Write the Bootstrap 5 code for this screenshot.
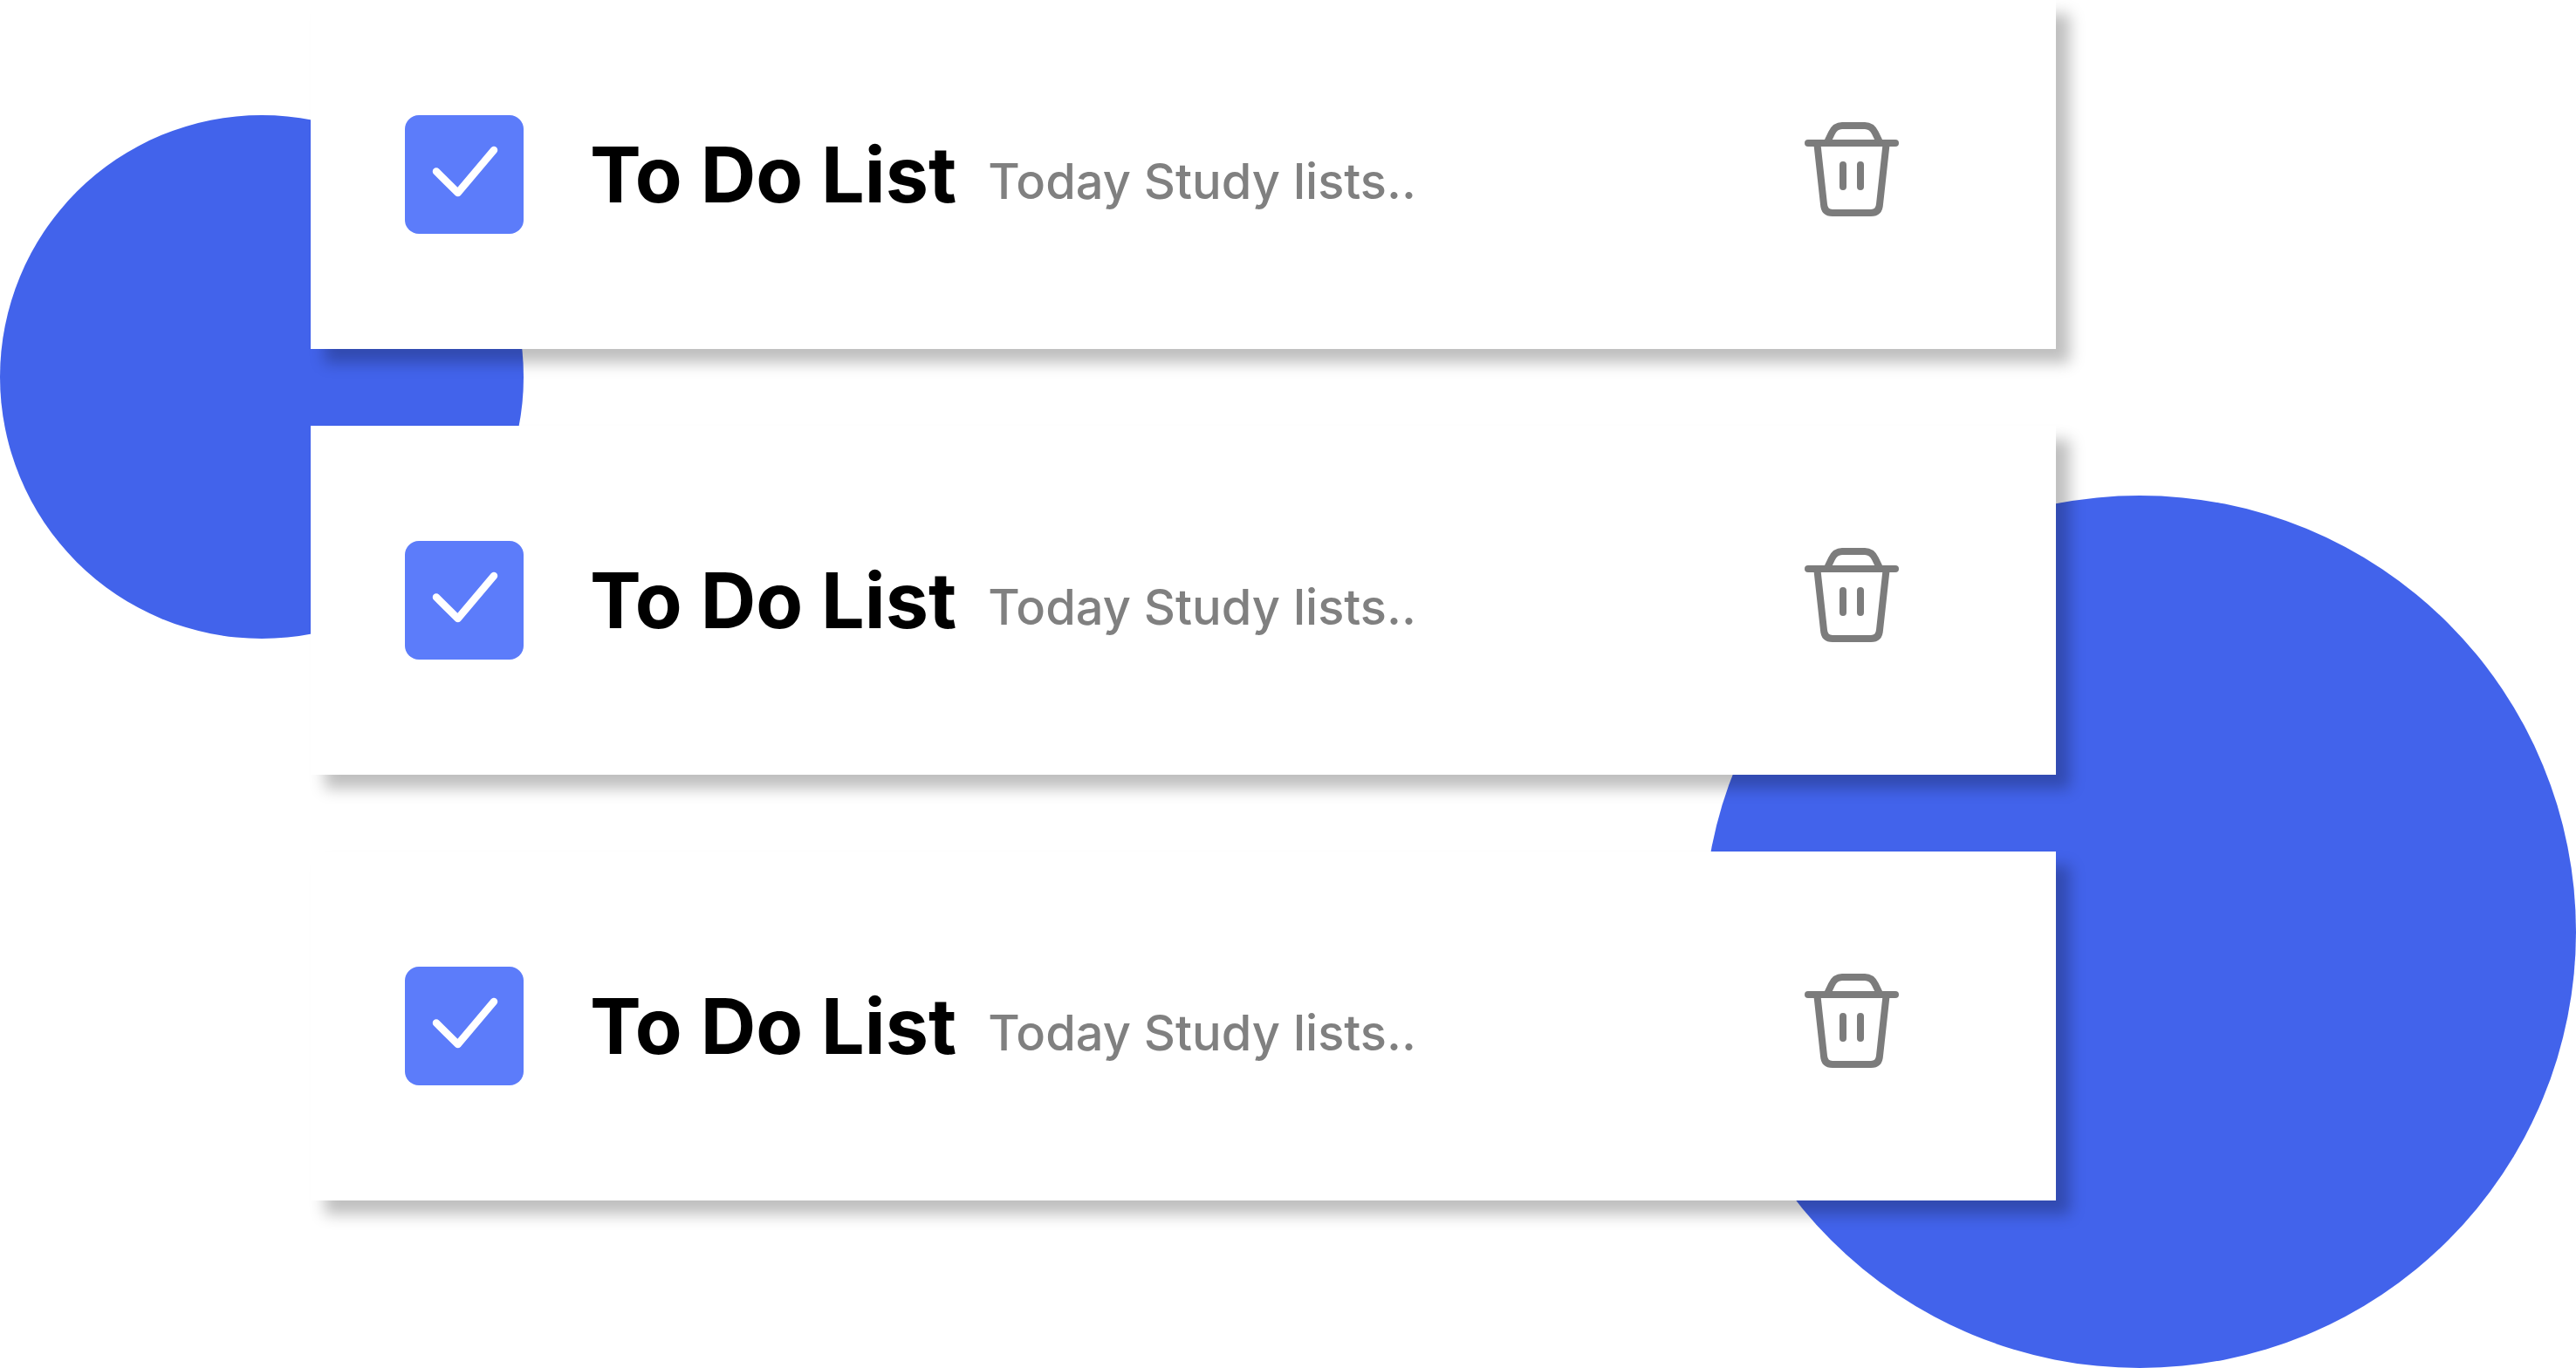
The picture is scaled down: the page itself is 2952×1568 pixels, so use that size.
<!DOCTYPE html>
<html lang="en">
<head>
<meta charset="utf-8">
<meta name="viewport" content="width=device-width, initial-scale=1">
<title>To Do List</title>
<link href="https://cdn.jsdelivr.net/npm/bootstrap@5.3.0/dist/css/bootstrap.min.css" rel="stylesheet">
<style>
  body { font-family: Inter, "Liberation Sans", sans-serif; background: #fff; }
  .board { min-height: 100vh; }
  /* decorative discs behind the cards */
  .disc { border-radius: 50%; aspect-ratio: 1; background: #4263eb; z-index: 0; }
  .disc-start { width: 600px; top: 132px; left: 0; }
  .disc-end { width: 1000px; bottom: 0; right: 0; }
  .todo-list { width: 67.75%; margin-left: 12.06%; gap: 88px; z-index: 1; }
  .todo-card { min-height: 400px; padding: 0 174px 0 108px; background: #fff; box-shadow: 16px 16px 16px rgba(0, 0, 0, .25); }
  .tick-box { width: 136px; height: 136px; margin-right: 76px; }
  .tick-box .form-check-input { width: 136px; height: 136px; border: 0; border-radius: 16px; background-color: #e9ecef; }
  .tick-box .form-check-input:checked { background-color: #5c7cfa; background-image: none; }
  .tick-box svg { pointer-events: none; }
  .form-check-input:not(:checked) + svg { display: none; }
  .todo-title { font-size: 88px; line-height: 108px; font-weight: 700; color: #000; margin-right: 36px; }
  .todo-note { font-size: 56px; line-height: 68px; font-weight: 500; color: #808080; }
  .trash-btn { color: #7c7c7c; line-height: 0; }
</style>
</head>
<body>
<svg class="d-none" xmlns="http://www.w3.org/2000/svg">
  <symbol id="tick" viewBox="0 0 136 136">
    <path d="M36 64.5 60.7 89 102 40" fill="none" stroke="#fff" stroke-width="8.500" stroke-linecap="round" stroke-linejoin="round"/>
  </symbol>
  <symbol id="trash" viewBox="0 0 120 128">
    <g fill="none" stroke="currentColor" stroke-width="8" stroke-linecap="round">
      <path d="M10 28H110"/>
      <path stroke-linecap="butt" d="M31.500 28 37 16.500Q41 8 49 8H75Q83 8 87 16.500L92.500 28"/>
      <path stroke-linecap="butt" d="M20.300 28 28 98Q28.500 108 38 108H82Q91.500 108 92 98L99.700 28" />
      <path d="M50 53V78M70 53V78"/>
    </g>
  </symbol>
</svg>
<main class="board position-relative overflow-hidden">
  <div class="disc disc-start position-absolute"></div>
  <div class="disc disc-end position-absolute"></div>
  <ul class="todo-list list-unstyled d-flex flex-column position-relative mb-0">
    <li class="todo-card d-flex align-items-center">
      <div class="tick-box position-relative flex-shrink-0">
        <input class="form-check-input d-block m-0" type="checkbox" id="todo-1" checked>
        <svg class="position-absolute top-0 start-0" width="136" height="136" aria-hidden="true"><use href="#tick"/></svg>
      </div>
      <label class="todo-title" for="todo-1">To Do List</label>
      <span class="todo-note mt-3">Today Study lists..</span>
      <button class="trash-btn btn border-0 p-0 ms-auto" type="button" aria-label="Delete"><svg width="120" height="128" aria-hidden="true"><use href="#trash"/></svg></button>
    </li>
    <li class="todo-card d-flex align-items-center">
      <div class="tick-box position-relative flex-shrink-0">
        <input class="form-check-input d-block m-0" type="checkbox" id="todo-2" checked>
        <svg class="position-absolute top-0 start-0" width="136" height="136" aria-hidden="true"><use href="#tick"/></svg>
      </div>
      <label class="todo-title" for="todo-2">To Do List</label>
      <span class="todo-note mt-3">Today Study lists..</span>
      <button class="trash-btn btn border-0 p-0 ms-auto" type="button" aria-label="Delete"><svg width="120" height="128" aria-hidden="true"><use href="#trash"/></svg></button>
    </li>
    <li class="todo-card d-flex align-items-center">
      <div class="tick-box position-relative flex-shrink-0">
        <input class="form-check-input d-block m-0" type="checkbox" id="todo-3" checked>
        <svg class="position-absolute top-0 start-0" width="136" height="136" aria-hidden="true"><use href="#tick"/></svg>
      </div>
      <label class="todo-title" for="todo-3">To Do List</label>
      <span class="todo-note mt-3">Today Study lists..</span>
      <button class="trash-btn btn border-0 p-0 ms-auto" type="button" aria-label="Delete"><svg width="120" height="128" aria-hidden="true"><use href="#trash"/></svg></button>
    </li>
  </ul>
</main>
<script src="https://cdn.jsdelivr.net/npm/bootstrap@5.3.0/dist/js/bootstrap.bundle.min.js"></script>
</body>
</html>
